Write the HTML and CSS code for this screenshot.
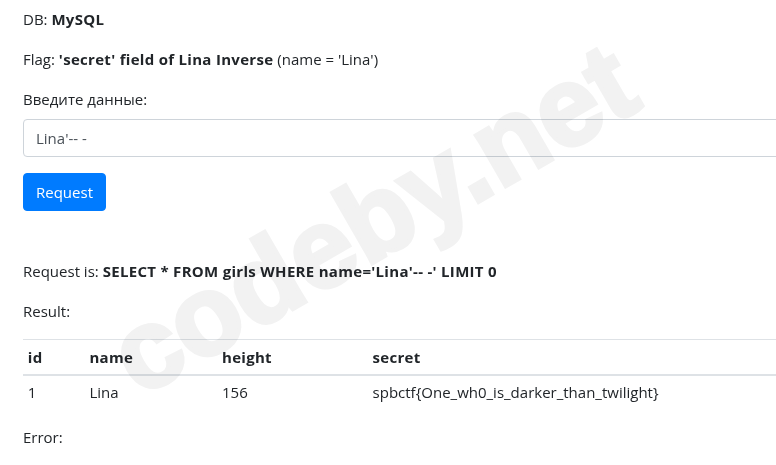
FILE: index.html
```html
<!DOCTYPE html>
<html lang="ru">
<head>
<meta charset="utf-8">
<title>SQLi</title>
<link rel="stylesheet" href="styles.css">
</head>
<body>
<div class="container">
  <p>DB: <b>MySQL</b></p>
  <p>Flag: <b>'secret' field of Lina Inverse</b> (name = 'Lina')</p>
  <form class="form">
    <div class="form-group">
      <label class="label" for="data">Введите данные:</label>
      <input class="input" id="data" type="text" value="Lina'-- -">
    </div>
    <button class="btn" type="button">Request</button>
  </form>
  <p>Request is: <b>SELECT * FROM girls WHERE name='Lina'-- -' LIMIT 0</b></p>
  <p>Result:</p>
  <table class="table">
    <thead>
      <tr><th class="c-id">id</th><th class="c-name">name</th><th class="c-height">height</th><th>secret</th></tr>
    </thead>
    <tbody>
      <tr><td>1</td><td>Lina</td><td>156</td><td>spbctf{One_wh0_is_darker_than_twilight}</td></tr>
    </tbody>
  </table>
  <p>Error:</p>
</div>
<div class="watermark">codeby.net</div>
</body>
</html>
```
FILE: styles.css
```css
html, body {
  margin: 0;
  padding: 0;
  overflow: hidden;
  background: #fff;
}
body {
  font-family: "Open Sans", "Noto Sans", sans-serif;
  font-size: 15px;
  line-height: 24px;
  color: #212529;
}
.container {
  width: 1110px;
  padding: 7px 0 0 23px;
}
p {
  margin: 0 0 16px;
}
b, th {
  font-weight: 700;
  letter-spacing: 0.3px;
}
.form {
  margin: 0 0 48px;
}
.form-group {
  margin-bottom: 16px;
}
.label {
  display: inline-block;
  margin-bottom: 8px;
}
.input {
  display: block;
  box-sizing: border-box;
  width: 100%;
  height: 38px;
  padding: 6px 12px;
  font: inherit;
  color: #495057;
  background: transparent;
  border: 1px solid #ced4da;
  border-radius: 4px;
  outline: none;
}
.btn {
  display: inline-block;
  box-sizing: border-box;
  height: 38px;
  padding: 6px 12px;
  font: inherit;
  color: #fff;
  background: #007bff;
  border: 1px solid #007bff;
  border-radius: 4px;
}
.table {
  width: 100%;
  table-layout: fixed;
  border-collapse: collapse;
  margin-bottom: 16px;
}
.table th, .table td {
  padding: 4.8px;
  text-align: left;
  vertical-align: top;
  border-top: 1px solid #dee2e6;
}
.table thead th {
  border-bottom: 2px solid #dee2e6;
}
.c-id { width: 52px; }
.c-name { width: 123px; }
.c-height { width: 141px; }
.watermark {
  position: absolute;
  left: 373px;
  top: 219px;
  transform: translate(-50%, -50%) rotate(-30deg);
  font-family: "Liberation Sans", Arial, sans-serif;
  font-weight: 700;
  font-size: 112px;
  line-height: 1;
  white-space: nowrap;
  color: #f2f2f2;
  -webkit-text-stroke: 4px #f2f2f2;
  mix-blend-mode: multiply;
  pointer-events: none;
}
```
